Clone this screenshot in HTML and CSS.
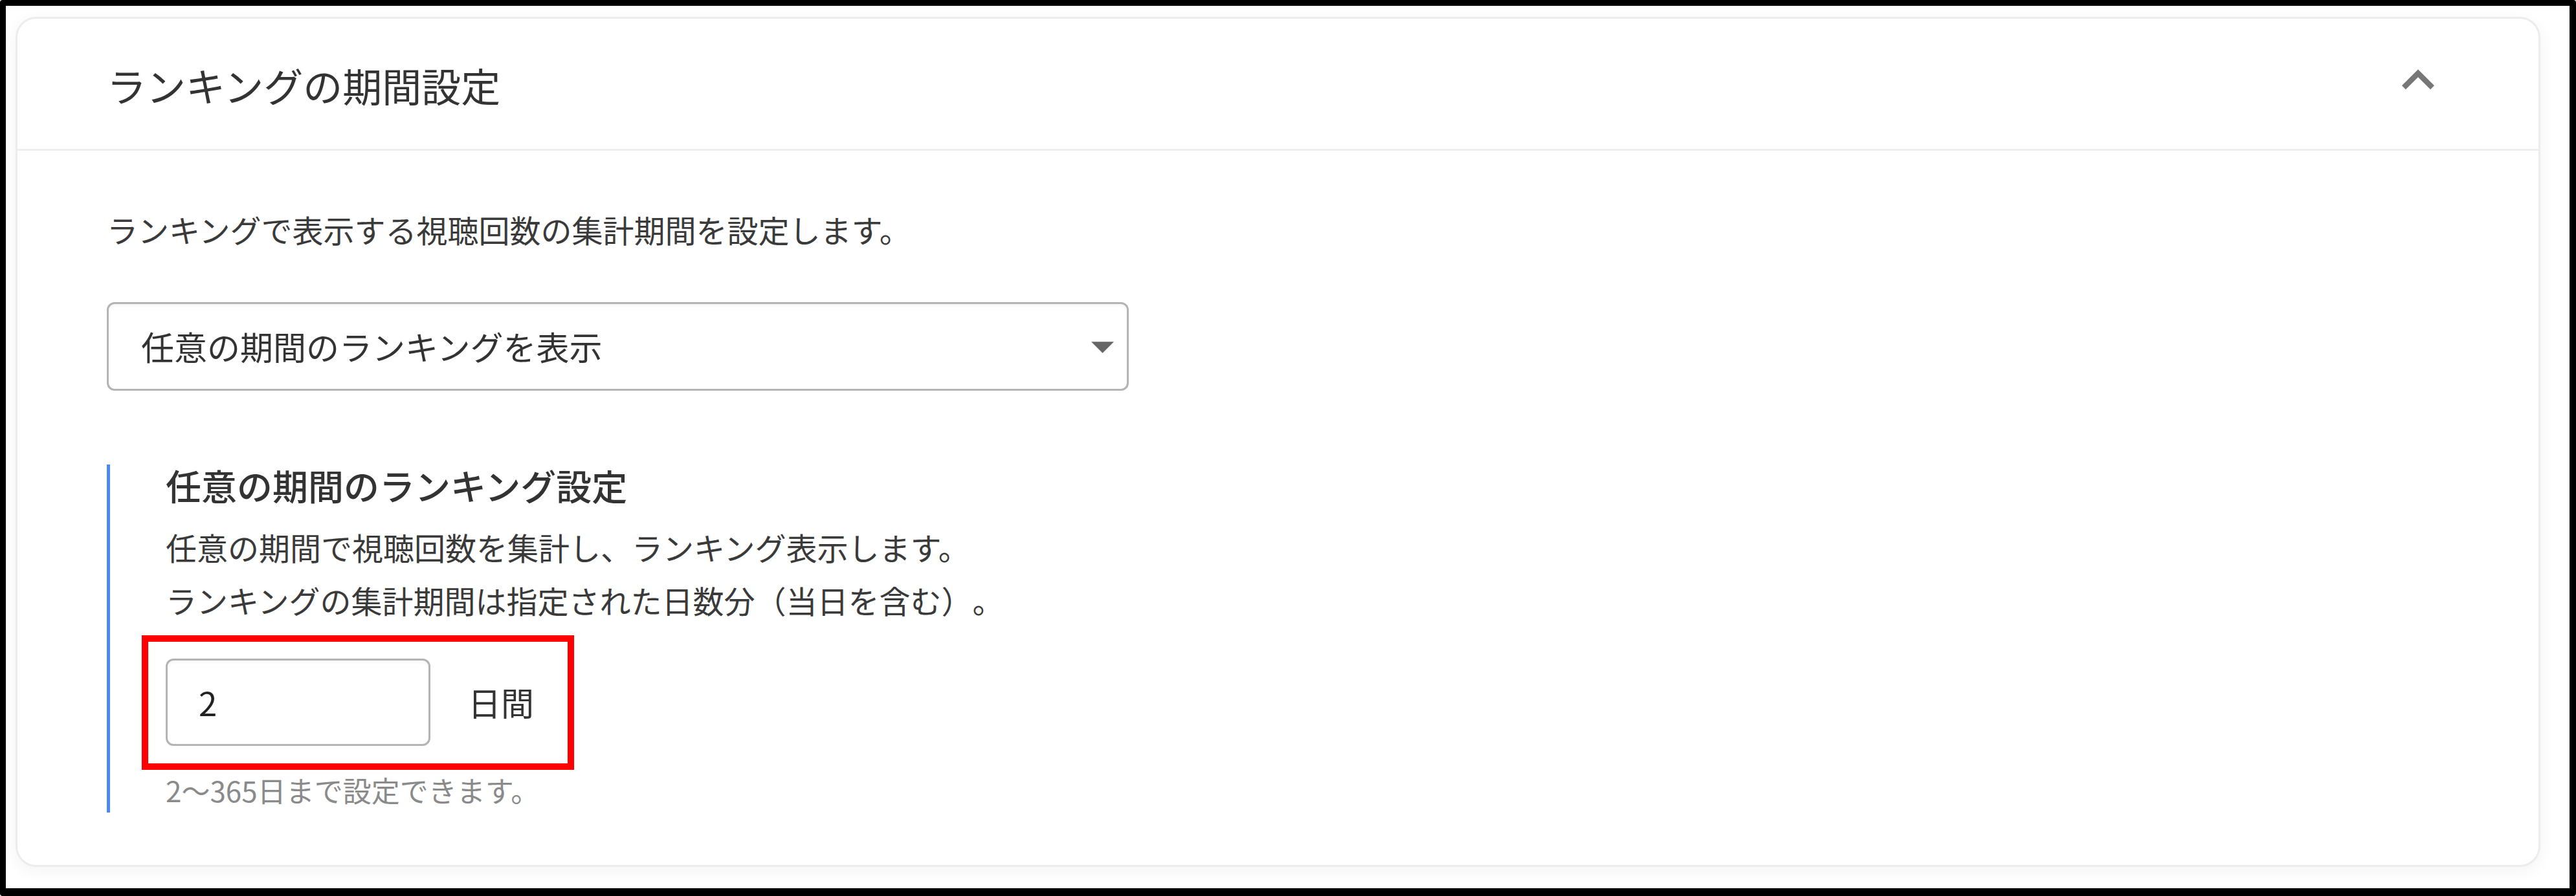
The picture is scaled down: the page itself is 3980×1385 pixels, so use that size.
FILE: index.html
```html
<!DOCTYPE html>
<html lang="ja">
<head>
    <meta charset="UTF-8">
    <meta name="viewport" content="width=device-width, initial-scale=1.0">
    <title>ランキングの期間設定</title>
    <link rel="stylesheet" href="styles.css">
</head>
<body>

    <div class="frame">
        <section class="panel">
            <header class="panel-head">
                <h2 class="panel-title">ランキングの期間設定</h2>
                <!-- collapse toggle -->
                <svg class="chevron" viewBox="0 0 24 24" aria-hidden="true">
                    <path d="M12 8l-6 6 1.41 1.41L12 10.83l4.59 4.58L18 14z"/>
                </svg>
            </header>

            <div class="panel-body">
                <p class="lead">ランキングで表示する視聴回数の集計期間を設定します。</p>

                <div class="select-box" role="button">
                    <span class="select-value">任意の期間のランキングを表示</span>
                    <svg class="select-arrow" viewBox="0 0 10 5" aria-hidden="true">
                        <path d="M0 0h10L5 5z"/>
                    </svg>
                </div>

                <div class="range-block">
                    <h3 class="range-title">任意の期間のランキング設定</h3>
                    <p class="range-note">任意の期間で視聴回数を集計し、ランキング表示します。<br>ランキングの集計期間は指定された日数分（当日を含む）。</p>

                    <div class="days-row">
                        <input type="text" class="days-input" id="daysInput" value="2">
                        <label for="daysInput" class="days-unit">日間</label>
                        <span class="callout"></span>
                    </div>

                    <p class="range-hint">2〜365日まで設定できます。</p>
                </div>
            </div>
        </section>
    </div>

</body>
</html>
```

FILE: styles.css
```css
html, body {
    margin: 0;
    height: 100%;
    background-color: #fff;
}

body {
    font-family: "Noto Sans CJK JP", "Noto Sans", sans-serif;
    color: #333;
    text-spacing-trim: space-all;
}

.frame {
    height: 100%;
    box-sizing: border-box;
    border: 9px solid #000;
    border-right-width: 10px;
    border-bottom-width: 12px;
    border-radius: 4px;
    padding: 17px 45px 33px 15px;
}

.panel {
    border: 3px solid #ececec;
    border-radius: 32px;
    box-shadow: 0 6px 24px rgba(0, 0, 0, 0.05);
    background-color: #fff;
}

.panel-head {
    height: 201px;
    display: flex;
    align-items: center;
    justify-content: space-between;
    padding: 0 136px 0 138px;
    border-bottom: 3px solid #efefef;
}

.panel-title {
    margin: 0;
    padding-top: 5px;
    font-size: 61px;
    font-weight: 400;
    line-height: 1.4;
    color: #333;
}

.chevron {
    width: 100px;
    height: 100px;
    margin-bottom: 12px;
    fill: #777;
}

.panel-body {
    padding: 81px 138px 81px 138px;
}

.lead {
    margin: 0;
    font-size: 48px;
    line-height: 1.7;
    color: #3a3a3a;
}

.select-box {
    margin-top: 71px;
    width: 1579px;
    height: 137px;
    box-sizing: border-box;
    display: flex;
    align-items: center;
    justify-content: space-between;
    padding: 0 20px 0 50px;
    border: 3px solid #b4b4b4;
    border-radius: 12px;
    box-shadow: inset 0 3px 4px rgba(0, 0, 0, 0.04);
    cursor: pointer;
}

.select-value {
    font-size: 51px;
    color: #333;
}

.select-arrow {
    width: 35px;
    height: 18px;
    margin-top: 4px;
    fill: #666;
}

.range-block {
    margin-top: 114px;
    border-left: 5px solid #4a89f3;
    padding: 0 0 3px 86px;
}

.range-title {
    margin: 0;
    font-size: 55px;
    font-weight: 500;
    line-height: 62px;
    color: #333;
}

.range-note {
    margin: 24px 0 0;
    font-size: 48px;
    line-height: 82px;
    color: #3a3a3a;
}

.days-row {
    position: relative;
    display: flex;
    align-items: center;
    width: fit-content;
    margin-top: 50px;
}

.days-input {
    width: 409px;
    height: 135px;
    box-sizing: border-box;
    padding: 0 48px;
    border: 3px solid #b4b4b4;
    border-radius: 12px;
    box-shadow: inset 0 3px 4px rgba(0, 0, 0, 0.04);
    font-family: inherit;
    font-size: 51px;
    color: #222;
    outline: none;
}

.days-unit {
    margin-left: 58px;
    font-size: 51px;
    color: #333;
}

/* red annotation frame drawn over the field */
.callout {
    position: absolute;
    top: -36px;
    left: -37px;
    right: -62px;
    bottom: -37px;
    border: 10px solid #f00;
    pointer-events: none;
}

.range-hint {
    margin: 37px 0 0;
    font-size: 44px;
    line-height: 63px;
    color: #8a8a8a;
}
```
